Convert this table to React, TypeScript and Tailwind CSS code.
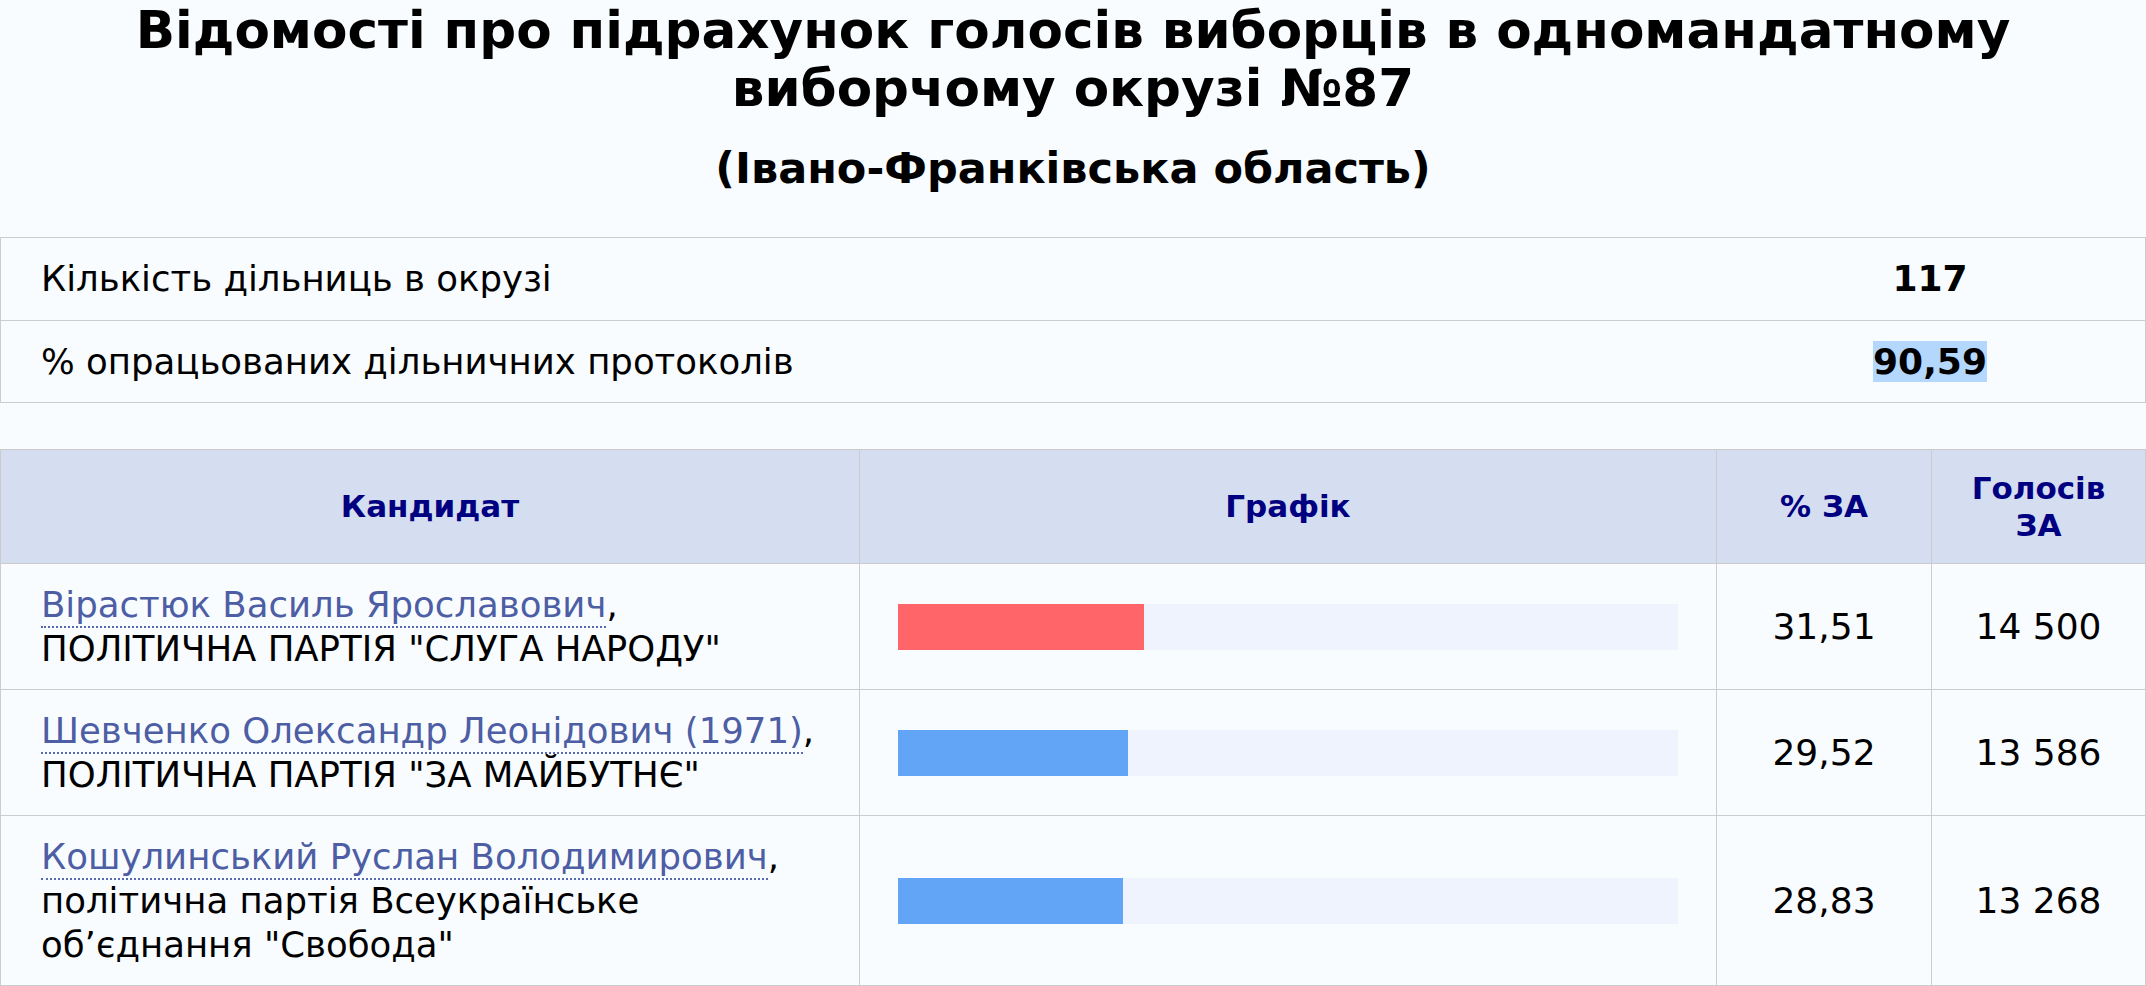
const summary = [
  { label: 'Кількість дільниць в окрузі', value: '117', marked: false },
  { label: '% опрацьованих дільничних протоколів', value: '90,59', marked: true },
]

const candidates = [
  {
    name: 'Вірастюк Василь Ярославович',
    party: 'ПОЛІТИЧНА ПАРТІЯ "СЛУГА НАРОДУ"',
    percent: '31,51',
    share: 31.51,
    votes: '14 500',
    leader: true,
  },
  {
    name: 'Шевченко Олександр Леонідович (1971)',
    party: 'ПОЛІТИЧНА ПАРТІЯ "ЗА МАЙБУТНЄ"',
    percent: '29,52',
    share: 29.52,
    votes: '13 586',
    leader: false,
  },
  {
    name: 'Кошулинський Руслан Володимирович',
    party: 'політична партія Всеукраїнське об’єднання "Свобода"',
    percent: '28,83',
    share: 28.83,
    votes: '13 268',
    leader: false,
  },
]

export default function App() {
  return (
    <div className="min-h-screen bg-[#f9fcfe] text-black font-['DejaVu_Sans',Verdana,sans-serif]">
      <h1 className="pt-[1px] text-center text-[51.6px] leading-[58px] font-bold">
        Відомості про підрахунок голосів виборців в одномандатному
        <br />
        виборчому окрузі №87
      </h1>
      <h2 className="mt-[26px] text-center text-[43px] leading-[50px] font-bold">
        (Івано-Франківська область)
      </h2>

      <div className="mt-[44px] border border-[#cccccc]">
        {summary.map((row, i) => (
          <div
            key={row.label}
            className={`grid grid-cols-[1fr_430px] items-center h-[82px] text-[35.5px] ${i > 0 ? 'border-t border-[#cccccc]' : ''}`}
          >
            <div className="pl-[40px]">{row.label}</div>
            <div className="text-center font-bold text-[36px]">
              <span className={row.marked ? 'bg-[#b3d7fd]' : ''}>{row.value}</span>
            </div>
          </div>
        ))}
      </div>

      <table className="mt-[46px] w-full border-collapse table-fixed text-[35.5px]">
        <colgroup>
          <col className="w-[859px]" />
          <col className="w-[857px]" />
          <col className="w-[215px]" />
          <col />
        </colgroup>
        <thead>
          <tr className="bg-[#d5ddf1] text-[#000080] text-[31px] leading-[37px]">
            <th className="border border-[#cccccc] py-[19.5px] font-bold">Кандидат</th>
            <th className="border border-[#cccccc] py-[19.5px] font-bold">Графік</th>
            <th className="border border-[#cccccc] py-[19.5px] font-bold">% ЗА</th>
            <th className="border border-[#cccccc] py-[19.5px] font-bold">
              Голосів
              <br />
              ЗА
            </th>
          </tr>
        </thead>
        <tbody>
          {candidates.map((c) => (
            <tr key={c.name} className="leading-[44px]">
              <td className="border border-[#cccccc] pl-[40px] pr-[20px] py-[18.5px] align-middle">
                <span className="whitespace-nowrap">
                  <span className="text-[#4d5ea5] border-b-2 border-dotted border-[#5a6ab0] pb-[1px]">{c.name}</span>,
                </span>
                <br />
                {c.party}
              </td>
              <td className="border border-[#cccccc] px-[38px] align-middle">
                <div className="h-[46px] bg-[#eef3fe]">
                  <div
                    className={`h-full ${c.leader ? 'bg-[#ff6569]' : 'bg-[#62a4f6]'}`}
                    style={{ width: `${c.share}%` }}
                  />
                </div>
              </td>
              <td className="border border-[#cccccc] text-center align-middle text-[36px]">{c.percent}</td>
              <td className="border border-[#cccccc] text-center align-middle text-[36px]">{c.votes}</td>
            </tr>
          ))}
        </tbody>
      </table>
    </div>
  )
}
